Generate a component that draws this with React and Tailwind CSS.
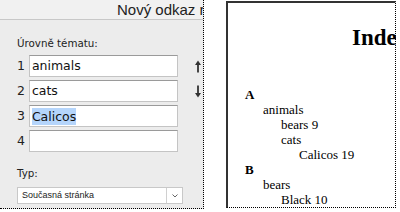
import React from "react";

const levels = ["animals", "cats", "Calicos", ""];

const entries = [
  { text: "A", indent: 0, bold: true },
  { text: "animals", indent: 1 },
  { text: "bears 9", indent: 2 },
  { text: "cats", indent: 2 },
  { text: "Calicos 19", indent: 3 },
  { text: "B", indent: 0, bold: true },
  { text: "bears", indent: 1 },
  { text: "Black 10", indent: 2 },
];

const indentClass = ["pl-[17px]", "pl-[35px]", "pl-[53px]", "pl-[71px]"];

function Arrow({ down }) {
  return (
    <svg width="8" height="13" viewBox="0 0 8 13" className="text-[#333]">
      {down ? (
        <>
          <path d="M4 0.5V10" stroke="currentColor" strokeWidth="1.8" />
          <path d="M1 8L4 12.5L7 8Z" fill="currentColor" />
        </>
      ) : (
        <>
          <path d="M4 3V12.5" stroke="currentColor" strokeWidth="1.8" />
          <path d="M1 5L4 0.5L7 5Z" fill="currentColor" />
        </>
      )}
    </svg>
  );
}

function LevelRow({ num, value, arrow }) {
  return (
    <div className="flex items-center h-[22px]">
      <span className="w-[12px] text-[12.5px] text-[#222]">{num}</span>
      <div className="w-[151px] h-[22px] bg-white border border-[#c4c4c4] border-t-[#9a9a9a] flex items-center pl-[2px] text-[12.5px] text-[#111]">
        {value === "Calicos" ? (
          <span className="bg-[#b5d5fb] leading-[17px]">{value}</span>
        ) : (
          <span>{value}</span>
        )}
      </div>
      <div className="w-[25px] flex justify-end pr-[1px]">
        {arrow === "up" && <Arrow />}
        {arrow === "down" && <Arrow down />}
      </div>
    </div>
  );
}

export default function App() {
  return (
    <div className="w-[400px] h-[212px] bg-white flex items-start overflow-hidden">
      {/* dialog panel */}
      <div className="w-[204px] h-[209px] bg-[#ececec] border-r border-b border-dotted border-black font-['DejaVu_Sans',sans-serif] overflow-hidden">
        <div className="h-[20px] bg-[#f1f1f1] border-b border-[#c8c8c8] pl-[117px] whitespace-nowrap overflow-hidden font-['Liberation_Sans',sans-serif] text-[15px] leading-[19px] text-[#222]">
          Nový odkaz rejstříku
        </div>
        <div className="pl-[17px]">
          <div className="mt-[17px] text-[10.3px] leading-[13px] text-[#222]">Úrovně tématu:</div>
          <div className="mt-[5px] flex flex-col gap-[3px]">
            <LevelRow num="1" value={levels[0]} arrow="up" />
            <LevelRow num="2" value={levels[1]} arrow="down" />
            <LevelRow num="3" value={levels[2]} />
            <LevelRow num="4" value={levels[3]} />
          </div>
          <div className="mt-[15px] text-[10.3px] leading-[13px] text-[#222]">Typ:</div>
          <div className="mt-[7px] w-[166px] h-[17px] bg-white border border-[#c8c8c8] flex items-center">
            <span className="flex-1 pl-[4px] font-['Liberation_Sans',sans-serif] text-[9px] text-[#222]">Současná stránka</span>
            <span className="w-[16px] h-full border-l border-[#d0d0d0] flex items-center justify-center">
              <svg width="6" height="4" viewBox="0 0 6 4">
                <path d="M0.5 0.5L3 3L5.5 0.5" fill="none" stroke="#666" strokeWidth="1" />
              </svg>
            </span>
          </div>
        </div>
      </div>

      {/* index page preview */}
      <div className="ml-[22px] mt-[1px] w-[170px] h-[207px] relative overflow-hidden">
        <div className="h-full bg-white border-l-2 border-t-2 border-[#333] [border-right:1px_dotted_#000] [border-bottom:1px_dotted_#000] font-['Liberation_Serif',serif] text-black">
          <div className="pt-[21px] pl-[124px] whitespace-nowrap text-[23px] font-bold leading-[28px]">
            Index
          </div>
          <div className="mt-[35px]">
            {entries.map((e, i) => (
              <div
                key={i}
                className={`${indentClass[e.indent]} text-[13px] leading-[15px] whitespace-nowrap ${
                  e.bold ? "font-bold text-[12px]" : ""
                }`}
              >
                {e.text}
              </div>
            ))}
          </div>
        </div>
      </div>
    </div>
  );
}
